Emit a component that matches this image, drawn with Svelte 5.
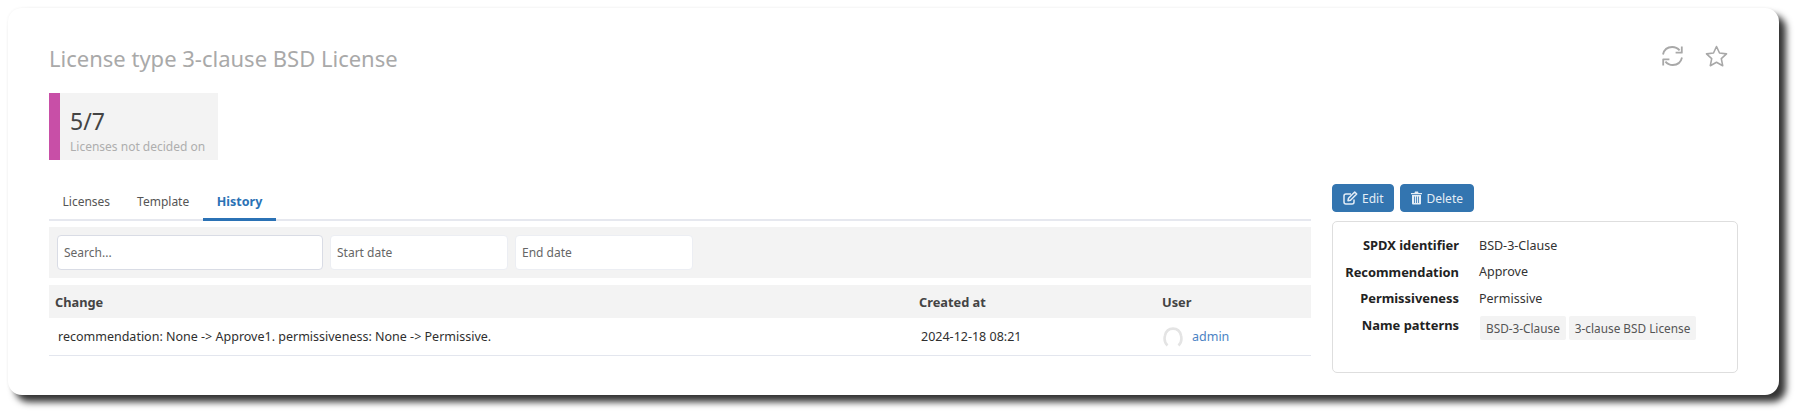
<script>
  const tabs = ['Licenses', 'Template', 'History'];
  const details = [
    { label: 'SPDX identifier', value: 'BSD-3-Clause' },
    { label: 'Recommendation', value: 'Approve' },
    { label: 'Permissiveness', value: 'Permissive' }
  ];
  const patterns = ['BSD-3-Clause', '3-clause BSD License'];
</script>

<div class="page">
  <div class="card">
    <header class="top">
      <h1>License type 3-clause BSD License</h1>
      <div class="actions">
        <svg width="23" height="22" viewBox="0 0 23 22" fill="none" stroke="currentColor" stroke-width="1.8">
          <path d="M2 9.500C3 5 6.600 2 11.200 2c3 0 5.600 1.300 7.400 3.400" />
          <path d="M20.800 1.500v6.200h-6.200" stroke-linejoin="round" />
          <path d="M21 12.500c-1 4.500-4.600 7.500-9.200 7.500-3 0-5.600-1.300-7.400-3.400" />
          <path d="M2.200 20.500v-6.200h6.200" stroke-linejoin="round" />
        </svg>
        <svg width="23" height="22" viewBox="0 0 23 22" fill="none" stroke="currentColor" stroke-width="1.6" stroke-linejoin="round">
          <path d="M11.500 1.500l3 6.500 7 .9-5.200 4.800 1.400 7-6.200-3.500-6.200 3.500 1.400-7L1.500 8.900l7-.9z" />
        </svg>
      </div>
    </header>

    <div class="stat">
      <div class="num">5/7</div>
      <div class="cap">Licenses not decided on</div>
    </div>

    <div class="columns">
      <section class="left">
        <nav class="tabs">
          {#each tabs as tab}
            <span class="tab" class:active={tab === 'History'}>{tab}</span>
          {/each}
        </nav>

        <div class="filters">
          <input class="search" placeholder="Search..." />
          <input class="date" placeholder="Start date" />
          <input class="date" placeholder="End date" />
        </div>

        <div class="row head">
          <div>Change</div>
          <div>Created at</div>
          <div>User</div>
        </div>
        <div class="row body">
          <div class="change">recommendation: None -&gt; Approve1. permissiveness: None -&gt; Permissive.</div>
          <div class="when">2024-12-18 08:21</div>
          <div class="user">
            <svg width="20" height="20" viewBox="0 0 20 20" fill="none" stroke="#e4e4e4" stroke-width="2.600">
              <path d="M4.500 18.500C1.800 16 1 12.500 2 8.500 3 4 6 1.600 10 1.600s7 2.400 8 6.900c1 4 .2 7.500-2.500 10" />
            </svg>
            <a href="#admin">admin</a>
          </div>
        </div>
      </section>

      <aside class="right">
        <div class="buttons">
          <button>
            <svg width="15" height="14" viewBox="0 0 15 14" fill="none" stroke="currentColor" stroke-width="1.500">
              <path d="M11 8.500v2.500a2 2 0 0 1-2 2H3a2 2 0 0 1-2-2V5a2 2 0 0 1 2-2h5" />
              <path d="M5.500 7.200L11.700 1l2 2-6.200 6.200-2.500.5z" stroke-linejoin="round" />
            </svg>
            Edit
          </button>
          <button>
            <svg width="11" height="14" viewBox="0 0 11 14" fill="currentColor">
              <path d="M0 2h3.500l.5-1.500h3L7.500 2H11v1.200H0z" />
              <path fill-rule="evenodd" d="M1 4h9v8.500a1 1 0 0 1-1 1H2a1 1 0 0 1-1-1zM3 5.500v6.500h.8V5.500zm2.100 0v6.500h.8V5.500zm2.100 0v6.500h.8V5.500z" />
            </svg>
            Delete
          </button>
        </div>
        <div class="panel">
          {#each details as d}
            <div class="label">{d.label}</div>
            <div class="value">{d.value}</div>
          {/each}
          <div class="label">Name patterns</div>
          <div class="chips">
            {#each patterns as p}
              <span class="chip">{p}</span>
            {/each}
          </div>
        </div>
      </aside>
    </div>
  </div>
</div>

<style>
  :global(body) {
    margin: 0;
    background: #fff;
  }

  .page {
    box-sizing: border-box;
    height: 416px;
    padding: 8px 0 0 8px;
    overflow: hidden;
  }

  .card {
    box-sizing: border-box;
    width: 1771px;
    height: 387px;
    padding: 0 41px;
    background: #fff;
    border-radius: 14px;
    box-shadow: 7px 7px 7px rgba(0, 0, 0, 0.8), 0 0 3px rgba(0, 0, 0, 0.06);
    font-family: "Noto Sans", "Open Sans", sans-serif;
    font-size: 12.500px;
    color: #333;
  }

  .top {
    display: flex;
    justify-content: space-between;
    align-items: flex-start;
    height: 85px;
  }

  h1 {
    margin: 35px 0 0;
    font-size: 22px;
    line-height: 30px;
    font-weight: 400;
    color: #a9a9a9;
  }

  .actions {
    display: flex;
    gap: 21px;
    margin: 37px 10px 0 0;
    color: #a8a8a8;
  }

  .stat {
    box-sizing: border-box;
    width: 169px;
    height: 67px;
    padding: 13px 0 0 10px;
    background: #f3f3f3;
    border-left: 11px solid #c84fa7;
  }

  .num {
    font-size: 23px;
    line-height: 30px;
    color: #444;
  }

  .cap {
    margin-top: 3px;
    font-size: 12px;
    line-height: 16px;
    color: #aeaeae;
    white-space: nowrap;
  }

  .columns {
    display: flex;
    gap: 21px;
    margin-top: 25px;
  }

  .left {
    width: 1262px;
  }

  .tabs {
    display: flex;
    height: 34px;
    border-bottom: 2px solid #e6e8ef;
    font-size: 12px;
  }

  .tab {
    padding: 8px 13.500px 0;
    line-height: 18px;
    color: #555;
    margin-bottom: -2px;
  }

  .tab.active {
    padding: 8px 14px 0;
    color: #2b72b5;
    font-size: 12.500px;
    font-weight: 700;
    border-bottom: 3px solid #2b72b5;
  }

  .filters {
    display: flex;
    gap: 7px;
    box-sizing: border-box;
    height: 51px;
    margin-top: 6px;
    padding: 8px;
    background: #f3f3f3;
    font-size: 12px;
  }

  input {
    box-sizing: border-box;
    height: 35px;
    padding: 0 6px;
    border: 1px solid #eceef3;
    border-radius: 4px;
    background: #fff;
    font: inherit;
  }

  input::placeholder {
    color: #666;
    opacity: 1;
  }

  .search {
    width: 266px;
    border-color: #d9dce5;
  }

  .date {
    width: 178px;
  }

  .row {
    display: grid;
    grid-template-columns: 870px 241px 1fr;
    align-items: center;
  }

  .head {
    height: 33px;
    margin-top: 7px;
    background: #f3f3f3;
    font-size: 12.800px;
    font-weight: 700;
    color: #444;
  }

  .head > div:first-child {
    padding-left: 6px;
  }

  .head > div:last-child {
    padding-left: 2px;
  }

  .body {
    height: 37px;
    border-bottom: 1px solid #e3e6ee;
    color: #2f2f2f;
  }

  .change {
    padding-left: 9px;
  }

  .when {
    padding-left: 2px;
  }

  .user {
    display: flex;
    align-items: center;
    gap: 9px;
    padding-left: 3px;
  }

  a {
    color: #4b83c4;
    text-decoration: none;
  }

  .right {
    width: 406px;
    margin-top: -1px;
  }

  .buttons {
    display: flex;
    gap: 6px;
    height: 28px;
    font-size: 12px;
  }

  button {
    display: flex;
    align-items: center;
    gap: 4px;
    height: 28px;
    padding: 0 10px;
    border: 1px solid #3375b0;
    border-radius: 4px;
    background: #3375b0;
    color: #e4edf6;
    font: inherit;
  }

  .panel {
    display: grid;
    grid-template-columns: 117px 1fr;
    column-gap: 20px;
    grid-auto-rows: 26.600px;
    align-items: center;
    box-sizing: border-box;
    height: 152px;
    margin-top: 9px;
    padding: 10px 0 0 9px;
    border: 1px solid #dedede;
    border-radius: 5px;
  }

  .label {
    text-align: right;
    font-size: 12.900px;
    font-weight: 700;
    color: #222;
    white-space: nowrap;
  }

  .value {
    color: #333;
  }

  .chips {
    display: flex;
    gap: 3px;
    margin: 6px 0 0 1px;
    font-size: 11.800px;
  }

  .chip {
    padding: 0 6px;
    line-height: 24px;
    background: #f3f3f3;
    border-radius: 2px;
    color: #555;
    white-space: nowrap;
  }
</style>
